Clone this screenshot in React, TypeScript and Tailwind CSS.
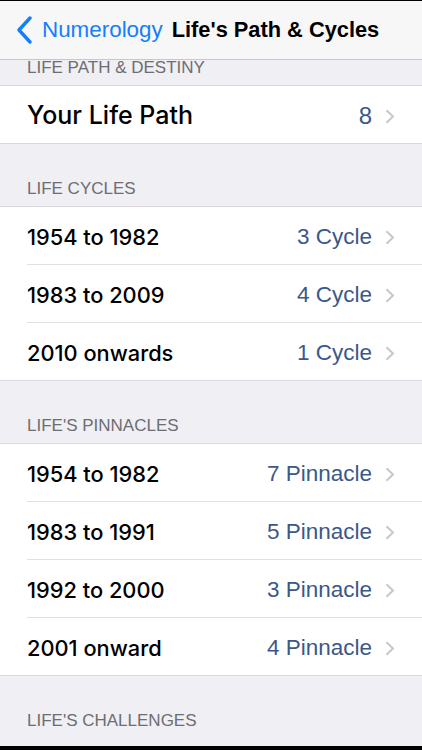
import React from 'react';

const Chevron = () => (
  <svg width="10" height="15" viewBox="0 0 10 15" className="ml-[13px] shrink-0">
    <path d="M1.5 1.2 L8 7.5 L1.5 13.8" fill="none" stroke="#c7c7cc" strokeWidth="2" />
  </svg>
);

type Row = { label: string; value: string };

const Header = ({ title, className }: { title: string; className: string }) => (
  <div className={`flex items-end bg-[#efeff4] border-b border-[#d8d8dc] px-[27px] pb-[9px] shrink-0 ${className}`}>
    <span className="text-[17px] text-[#6d6d72] uppercase leading-none">{title}</span>
  </div>
);

const Rows = ({ rows, big }: { rows: Row[]; big?: boolean }) => (
  <div className="bg-white border-b border-[#d8d8dc] shrink-0">
    {rows.map((r, i) => (
      <div key={r.label} className="pl-[27px]">
        <div
          className={`flex items-center pr-[27px] pt-[3px] ${
            i < rows.length - 1 ? 'border-b border-[#e0e0e4] h-[58px]' : 'h-[57px]'
          }`}
        >
          <span
            className={`flex-1 text-black font-medium ${big ? 'text-[25px]' : 'text-[21.8px]'}`}
            style={{ fontFamily: 'Inter, sans-serif' }}
          >
            {r.label}
          </span>
          <span className={`text-[#3b5889] ${big ? 'text-[24px]' : 'text-[22.5px]'}`}>{r.value}</span>
          <Chevron />
        </div>
      </div>
    ))}
  </div>
);

export default function App() {
  return (
    <div
      className="w-[422px] h-[750px] overflow-hidden bg-black flex flex-col"
      style={{ fontFamily: '"Liberation Sans", Arial, sans-serif' }}
    >
      <div className="mt-[1px] h-[59px] bg-[#f7f7f8] border-b border-[#c8c7cc] flex items-center shrink-0">
        <svg width="18" height="28" viewBox="0 0 18 28" className="ml-[16px]">
          <path d="M14 2 L3 14 L14 26" fill="none" stroke="#157efb" strokeWidth="3.4" strokeLinecap="round" strokeLinejoin="round" />
        </svg>
        <span className="ml-[8px] text-[22.4px] text-[#157efb]">Numerology</span>
        <span className="ml-[9px] text-[21.8px] font-bold text-black">Life's Path &amp; Cycles</span>
      </div>
      <div className="flex-1 bg-[#efeff4] flex flex-col">
        <Header title="Life Path & Destiny" className="h-[26px]" />
        <Rows big rows={[{ label: 'Your Life Path', value: '8' }]} />
        <Header title="Life Cycles" className="h-[63px]" />
        <Rows
          rows={[
            { label: '1954 to 1982', value: '3 Cycle' },
            { label: '1983 to 2009', value: '4 Cycle' },
            { label: '2010 onwards', value: '1 Cycle' },
          ]}
        />
        <Header title="Life's Pinnacles" className="h-[63px]" />
        <Rows
          rows={[
            { label: '1954 to 1982', value: '7 Pinnacle' },
            { label: '1983 to 1991', value: '5 Pinnacle' },
            { label: '1992 to 2000', value: '3 Pinnacle' },
            { label: '2001 onward', value: '4 Pinnacle' },
          ]}
        />
        <div className="flex-1 flex items-end px-[27px] pb-[17px] min-h-0">
          <span className="text-[17px] text-[#6d6d72] uppercase leading-none">Life's Challenges</span>
        </div>
      </div>
      <div className="h-[4px] bg-black shrink-0" />
    </div>
  );
}
